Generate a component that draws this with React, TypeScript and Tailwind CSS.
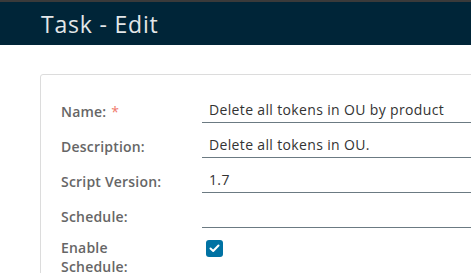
import React from "react";

const font = { fontFamily: '"Open Sans", "Liberation Sans", sans-serif' };

function Row({ label, required, value }: { label: string; required?: boolean; value?: string }) {
  return (
    <div className="flex items-center h-[24px] mt-[11px] first:mt-0">
      <div className="w-[141px] shrink-0 text-[14px] font-semibold tracking-[0.2px] text-[#666666]">
        {label}
        {required && <span className="text-[#f0776b] ml-[5px] font-normal">*</span>}
      </div>
      <div className="flex-1 h-[24px] border-b border-[#6b7a82] pl-[7px] text-[14px] tracking-[0.35px] leading-[22px] text-[#333333]">
        {value}
      </div>
    </div>
  );
}

export default function App() {
  return (
    <div className="w-[471px] h-[273px] overflow-hidden bg-white" style={font}>
      <div className="h-[45px] bg-[#002538] border-t-[2px] border-[#3a3a3a] pl-[41px] flex items-center">
        <span className="text-[23px] tracking-[0.8px] text-[#e3e6e8] leading-none mt-[1px]">Task - Edit</span>
      </div>
      <div className="ml-[40px] mt-[29px] w-[460px] border border-[#dcdcdc] rounded-[3px] pt-[24px] pl-[20px] pb-[20px]">
        <Row label="Name:" required value="Delete all tokens in OU by product" />
        <Row label="Description:" value="Delete all tokens in OU." />
        <Row label="Script Version:" value="1.7" />
        <Row label="Schedule:" value="" />
        <div className="flex mt-[10px]">
          <div className="w-[141px] shrink-0 text-[14px] font-semibold tracking-[0.2px] text-[#666666] leading-[19px]">
            Enable
            <br />
            Schedule:
          </div>
          <div className="pl-[4px] pt-[2px]">
            <div className="w-[17px] h-[17px] rounded-[3px] bg-[#0072a3] flex items-center justify-center">
              <svg width="11" height="9" viewBox="0 0 11 9">
                <path d="M1.5 4.5 L4.2 7 L9.5 1.5" fill="none" stroke="white" strokeWidth="2" strokeLinecap="round" strokeLinejoin="round" />
              </svg>
            </div>
          </div>
        </div>
      </div>
    </div>
  );
}
